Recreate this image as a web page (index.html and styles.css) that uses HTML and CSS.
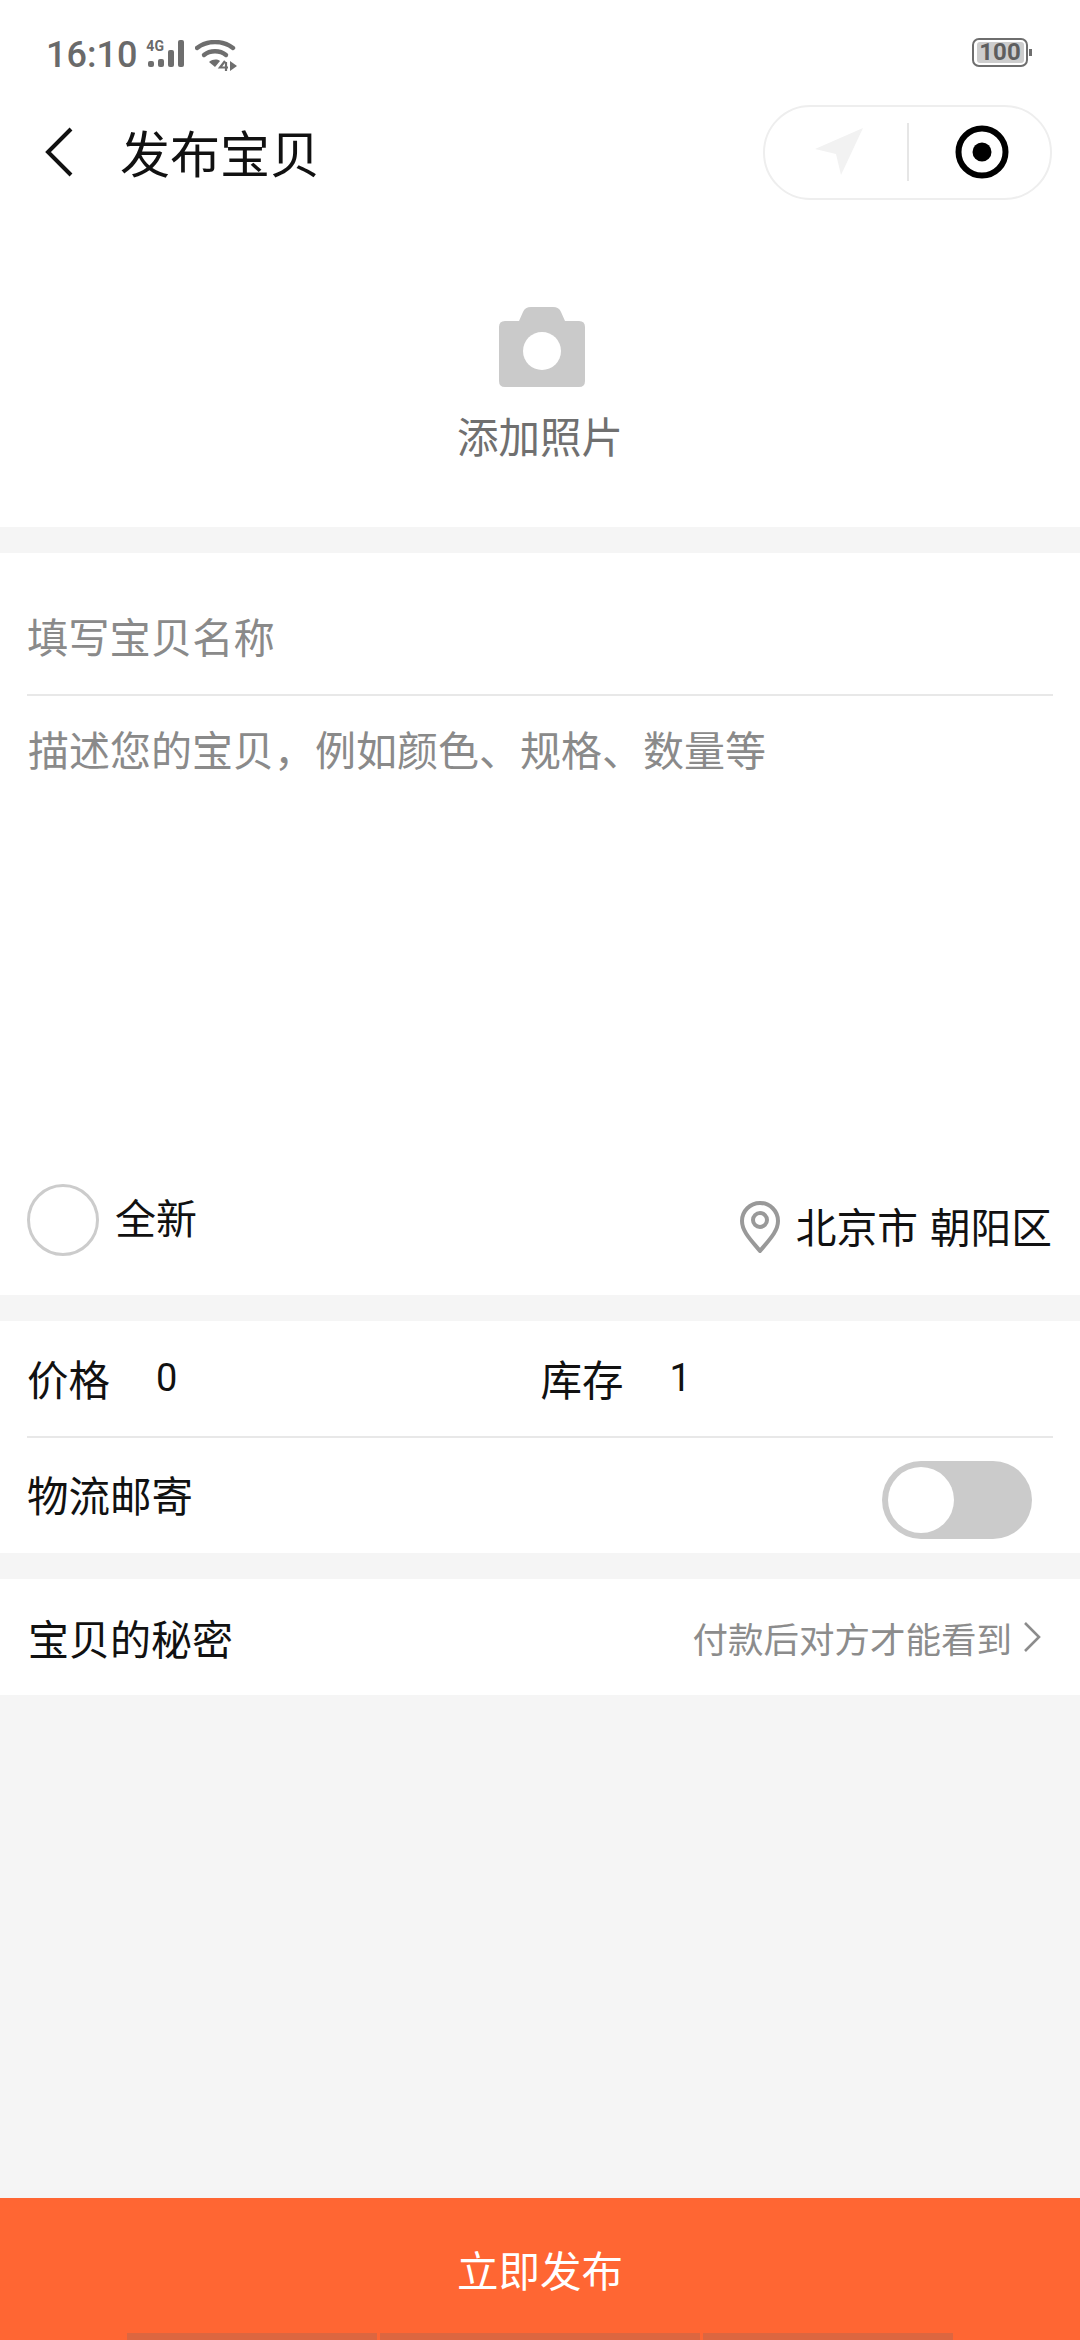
FILE: index.html
```html
<!DOCTYPE html>
<html lang="zh-CN">
<head>
    <meta charset="UTF-8">
    <title>发布宝贝</title>
    <link rel="stylesheet" href="styles.css">
</head>
<body>
    <div class="page">
        <!-- 状态栏 -->
        <div class="status-bar">
            <span class="time">16:10</span>
            <div class="signal">
                <span class="net">4G</span>
                <i class="bar b1"></i><i class="bar b2"></i><i class="bar b3"></i><i class="bar b4"></i>
            </div>
            <svg class="wifi" width="43" height="32" viewBox="0 0 43 32">
                <path d="M2 8C12 0 28 0 38 8" fill="none" stroke="#6e6e6e" stroke-width="4.4" stroke-linecap="round"/>
                <path d="M9 15C15 10 25 10 31 15" fill="none" stroke="#6e6e6e" stroke-width="4.4" stroke-linecap="round"/>
                <path d="M14 22C18 19 22 19 25 21L20 27Z" fill="#6e6e6e"/>
                <path d="M30 21L25 27.5H33M31 22V31" fill="none" stroke="#6e6e6e" stroke-width="2.2"/>
                <path d="M35 21L42 26L35 31Z" fill="#6e6e6e"/>
            </svg>
            <div class="battery"><span class="battery-level">100</span></div>
            <i class="battery-nub"></i>
        </div>

        <!-- 导航栏 -->
        <div class="nav-bar">
            <svg class="back" width="28" height="50" viewBox="0 0 28 50">
                <path d="M26 2L3 25L26 48" fill="none" stroke="#111" stroke-width="4"/>
            </svg>
            <h1>发布宝贝</h1>
            <div class="capsule">
                <div class="capsule-side">
                    <svg width="50" height="50" viewBox="0 0 50 50"><path d="M1 22L49 1L27 48L22 27Z" fill="#f2f2f2"/></svg>
                </div>
                <i class="capsule-line"></i>
                <div class="capsule-side">
                    <svg width="54" height="54" viewBox="0 0 54 54">
                        <circle cx="27" cy="27" r="23.5" fill="none" stroke="#000" stroke-width="6"/>
                        <circle cx="27" cy="27" r="9.5" fill="#000"/>
                    </svg>
                </div>
            </div>
        </div>

        <!-- 添加照片 -->
        <div class="photo">
            <svg class="photo-icon" width="88" height="82" viewBox="0 0 88 82">
                <path d="M7 15H21L25 6Q27 1 33 1H55Q61 1 63 6L67 15H81Q87 15 87 21V75Q87 81 81 81H7Q1 81 1 75V21Q1 15 7 15Z" fill="#cacaca"/>
                <circle cx="44" cy="45" r="19" fill="#fff"/>
            </svg>
            <span class="photo-label">添加照片</span>
        </div>

        <div class="section desc-section">
            <div class="title-input">填写宝贝名称</div>
            <div class="desc-input">描述您的宝贝，例如颜色、规格、数量等</div>
            <div class="desc-foot">
                <div class="is-new">
                    <i class="radio"></i>
                    <span>全新</span>
                </div>
                <div class="location">
                    <svg width="42" height="54" viewBox="0 0 42 54">
                        <path d="M21 51C11 39 3 31 3 21A18 18 0 0 1 39 21C39 31 31 39 21 51Z" fill="none" stroke="#999" stroke-width="4" stroke-linejoin="round"/>
                        <circle cx="21" cy="20" r="7" fill="none" stroke="#999" stroke-width="4"/>
                    </svg>
                    <span>北京市 朝阳区</span>
                </div>
            </div>
        </div>

        <div class="section">
            <div class="row row-price">
                <div class="cell"><span>价格</span><span class="num">0</span></div>
                <div class="cell"><span>库存</span><span class="num">1</span></div>
            </div>
            <div class="row row-ship">
                <span>物流邮寄</span>
                <div class="switch"><i class="knob"></i></div>
            </div>
        </div>

        <div class="section secret">
            <span>宝贝的秘密</span>
            <div class="secret-hint">
                <span>付款后对方才能看到</span>
                <svg width="18" height="32" viewBox="0 0 18 32"><path d="M2 2L16 16L2 30" fill="none" stroke="#8c8c8c" stroke-width="2.6"/></svg>
            </div>
        </div>

        <div class="spacer"></div>

        <div class="submit">
            <span class="submit-label">立即发布</span>
            <div class="submit-shadow"><i></i><i class="mid"></i><i></i></div>
        </div>
    </div>
</body>
</html>
```

FILE: styles.css
```css
body {
    margin: 0px;
    padding: 0px;
    font-family: "Noto Sans CJK SC", "Noto Sans", sans-serif;
    color: #111;
    background: #f5f5f5;
}

.page {
    display: flex;
    flex-direction: column;
    height: 2340px;
    overflow: hidden;
}

/* 状态栏 */
.status-bar {
    display: flex;
    align-items: center;
    height: 104px;
    padding: 0px 48px 0px 46px;
    box-sizing: border-box;
    background: #fff;
}
.time {
    font-family: Roboto, sans-serif;
    font-size: 36px;
    font-weight: 500;
    color: #6a6a6a;
    margin-top: 6px;
}
.signal {
    position: relative;
    display: flex;
    align-items: flex-end;
    gap: 4px;
    width: 36px;
    height: 27px;
    margin: 2px 11px 0px 11px;
}
.net {
    position: absolute;
    left: -2px;
    top: -1px;
    font-family: Roboto, sans-serif;
    font-size: 14px;
    font-weight: 700;
    line-height: 14px;
    color: #6a6a6a;
}
.bar {
    display: block;
    width: 6px;
    background: #6e6e6e;
    border-radius: 2px;
}
.b1 { height: 6px; }
.b2 { height: 8px; }
.b3 { height: 17px; }
.b4 { height: 27px; }
.wifi {
    margin-top: 7px;
}
.battery {
    display: flex;
    align-items: center;
    justify-content: center;
    width: 56px;
    height: 29px;
    margin-left: auto;
    box-sizing: border-box;
    border: 2px solid #6e6e6e;
    border-radius: 7px;
}
.battery-level {
    display: block;
    width: 47px;
    height: 21px;
    background: #cdcdcd;
    border-radius: 3px;
    font-family: Roboto, sans-serif;
    font-size: 24px;
    font-weight: 700;
    line-height: 21px;
    text-align: center;
    color: #5e5e5e;
}
.battery-nub {
    display: block;
    width: 3px;
    height: 7px;
    margin-left: 1px;
    background: #6e6e6e;
}

/* 导航栏 */
.nav-bar {
    display: flex;
    align-items: center;
    height: 96px;
    padding: 0px 28px 0px 45px;
    background: #fff;
}
h1 {
    margin: -2px 0px 0px 47px;
    font-size: 50px;
    font-weight: 400;
    line-height: 60px;
    color: #111;
}
.capsule {
    display: flex;
    align-items: center;
    width: 289px;
    height: 95px;
    margin-left: auto;
    box-sizing: border-box;
    border: 2px solid #eeeeee;
    border-radius: 48px;
}
.capsule-side {
    display: flex;
    flex: 1;
    align-items: center;
    justify-content: center;
    padding-left: 6px;
}
.capsule-line {
    display: block;
    width: 2px;
    height: 58px;
    background: #e6e6e6;
}

/* 添加照片 */
.photo {
    display: flex;
    flex-direction: column;
    align-items: center;
    height: 327px;
    padding-top: 106px;
    box-sizing: border-box;
    background: #fff;
}
.photo-icon {
    margin-left: 4px;
}
.photo-label {
    margin-top: 21px;
    font-size: 41.5px;
    line-height: 52px;
    color: #707070;
}

.section {
    margin-top: 26px;
    background: #fff;
}
.title-input {
    height: 143px;
    margin: 0px 27px;
    box-sizing: border-box;
    padding-top: 52px;
    border-bottom: 2px solid #e8e8e8;
    font-size: 41.3px;
    line-height: 60px;
    color: #8a8a8a;
}
.desc-input {
    height: 465px;
    padding: 22px 28px 0px;
    box-sizing: border-box;
    font-size: 41px;
    line-height: 60px;
    color: #8a8a8a;
}
.desc-foot {
    display: flex;
    justify-content: space-between;
    height: 134px;
    padding: 23px 28px 0px 27px;
    box-sizing: border-box;
    font-size: 41px;
}
.is-new {
    display: flex;
    align-items: center;
    height: 72px;
    gap: 16px;
}
.is-new span {
    margin-top: -8px;
}
.radio {
    display: block;
    width: 72px;
    height: 72px;
    box-sizing: border-box;
    border: 3px solid #cccccc;
    border-radius: 50%;
}
.location {
    display: flex;
    align-items: center;
    gap: 15px;
    height: 72px;
    margin-top: 7px;
    font-size: 40.7px;
    word-spacing: 3px;
}
.location span {
    margin-top: -4px;
}

.row {
    display: flex;
    align-items: center;
    margin: 0px 27px;
    font-size: 41.5px;
}
.row-price {
    height: 117px;
    padding-bottom: 2px;
    box-sizing: border-box;
    border-bottom: 2px solid #e8e8e8;
}
.row-ship {
    justify-content: space-between;
    height: 115px;
    margin-right: 48px;
}
.row-ship span {
    margin-top: -3px;
}
.cell {
    display: flex;
    flex: 1;
    align-items: center;
}
.cell + .cell {
    padding-left: 1px;
}
.num {
    margin-left: 46px;
    font-family: Roboto, sans-serif;
    font-size: 38px;
}
.switch {
    position: relative;
    width: 150px;
    height: 78px;
    margin-top: 8px;
    background: #cbcbcb;
    border-radius: 39px;
}
.knob {
    position: absolute;
    left: 6px;
    top: 6px;
    width: 66px;
    height: 66px;
    background: #fff;
    border-radius: 50%;
}

.secret {
    display: flex;
    align-items: center;
    justify-content: space-between;
    height: 116px;
    padding: 0px 39px 0px 28px;
    font-size: 41px;
}
.secret-hint {
    display: flex;
    align-items: center;
    gap: 11px;
    font-size: 35.5px;
    color: #8c8c8c;
}

.spacer {
    flex: 1;
}

.submit {
    display: flex;
    flex-direction: column;
    align-items: center;
    height: 142px;
    box-sizing: border-box;
    background: #ff6633;
    color: #fff;
}
.submit-label {
    margin-top: 42px;
    font-size: 41.5px;
    line-height: 58px;
}
.submit-shadow {
    display: flex;
    gap: 3px;
    width: 826px;
    height: 7px;
    margin-top: auto;
}
.submit-shadow i {
    display: block;
    flex: 250;
    background: #dc6640;
}
.submit-shadow .mid {
    flex: 320;
}
```
